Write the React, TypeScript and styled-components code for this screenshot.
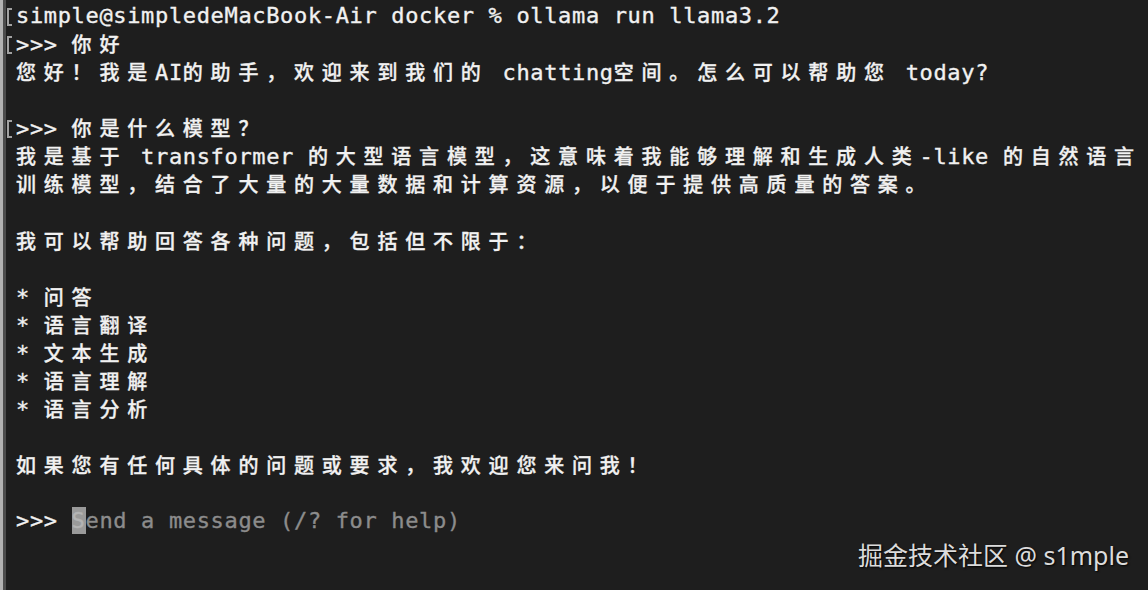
import React from "react";
import styled, { createGlobalStyle } from "styled-components";

const CELL = 13.9;
const LINE_H = 28.07;

const GlobalStyle = createGlobalStyle`
  html, body {
    margin: 0;
    padding: 0;
    background: #1e1e1e;
  }
  #root {
    width: 1148px;
    height: 590px;
  }
`;

const Screen = styled.div`
  position: relative;
  display: flex;
  width: 1148px;
  height: 590px;
  overflow: hidden;
  background: #1e1e1e;
  border-left: 3px solid #b2b2b2;
  box-sizing: border-box;
`;

const Terminal = styled.div`
  flex: 1;
  display: flex;
  flex-direction: column;
  padding-top: 2px;
  border-left: 3px solid #4c4c4c;
`;

const Line = styled.div`
  display: flex;
  height: ${LINE_H}px;
  flex: none;
`;

const Mark = styled.div`
  width: 10px;
  flex: none;
  display: flex;
  align-items: flex-start;
  padding-left: 1px;
  padding-top: 6px;
  box-sizing: border-box;
`;

const Bracket = styled.span`
  display: block;
  width: 5px;
  height: 18px;
  box-sizing: border-box;
  border: 2px solid #a2a2a2;
  border-right: none;
`;

const Content = styled.div<{ $dim?: boolean }>`
  white-space: pre;
  line-height: ${LINE_H}px;
  color: ${(p) => (p.$dim ? "#8c8c8c" : "#f1f1f1")};
`;

const Narrow = styled.span`
  font-family: "DejaVu Sans Mono", "Liberation Mono", monospace;
  font-size: 22px;
  letter-spacing: ${CELL - 22 * 0.60205}px;
  -webkit-text-stroke: 0.35px currentColor;
`;

const Wide = styled.span`
  font-family: "Noto Sans CJK SC", sans-serif;
  font-size: 20px;
  font-weight: 500;
  letter-spacing: ${CELL * 2 - 20}px;
  -webkit-text-stroke: 0.3px currentColor;
`;

const Placeholder = styled.span`
  color: #8c8c8c;
`;

const Cursor = styled.span`
  display: inline-block;
  height: 27px;
  line-height: 27px;
  background: #9a9a9a;
  color: #b4b4b4;
`;

const Watermark = styled.div`
  position: absolute;
  right: 19px;
  bottom: 19px;
  font-family: "Noto Sans", "Noto Sans CJK SC", sans-serif;
  font-size: 25px;
  line-height: 32px;
  color: #dcdcdc;
  text-shadow: 1px 1px 2px rgba(0, 0, 0, 0.95);
`;

const WIDE_RE = /([\u2E80-\u9FFF\u3000-\u303F\uFF00-\uFFEF]+)/;

function Text({ value }: { value: string }) {
  const parts = value.split(WIDE_RE).filter((s) => s.length > 0);
  return (
    <>
      {parts.map((part, i) =>
        WIDE_RE.test(part) ? (
          <Wide key={i}>{part}</Wide>
        ) : (
          <Narrow key={i}>{part}</Narrow>
        )
      )}
    </>
  );
}

type Row = { text: string; marked?: boolean };

const rows: Row[] = [
  { text: "simple@simpledeMacBook-Air docker % ollama run llama3.2", marked: true },
  { text: ">>> 你好", marked: true },
  { text: "您好！我是AI的助手，欢迎来到我们的 chatting空间。怎么可以帮助您 today?" },
  { text: "" },
  { text: ">>> 你是什么模型？", marked: true },
  { text: "我是基于 transformer 的大型语言模型，这意味着我能够理解和生成人类-like 的自然语言" },
  { text: "训练模型，结合了大量的大量数据和计算资源，以便于提供高质量的答案。" },
  { text: "" },
  { text: "我可以帮助回答各种问题，包括但不限于：" },
  { text: "" },
  { text: "* 问答" },
  { text: "* 语言翻译" },
  { text: "* 文本生成" },
  { text: "* 语言理解" },
  { text: "* 语言分析" },
  { text: "" },
  { text: "如果您有任何具体的问题或要求，我欢迎您来问我！" },
  { text: "" },
];

export default function App() {
  return (
    <>
      <GlobalStyle />
      <Screen>
        <Terminal>
          {rows.map((row, i) => (
            <Line key={i}>
              <Mark>{row.marked && <Bracket />}</Mark>
              <Content>
                <Text value={row.text} />
              </Content>
            </Line>
          ))}
          <Line>
            <Mark />
            <Content>
              <Narrow>{">>> "}</Narrow>
              <Narrow>
                <Cursor>S</Cursor>
                <Placeholder>end a message (/? for help)</Placeholder>
              </Narrow>
            </Content>
          </Line>
        </Terminal>
        <Watermark>掘金技术社区 @ s1mple</Watermark>
      </Screen>
    </>
  );
}
